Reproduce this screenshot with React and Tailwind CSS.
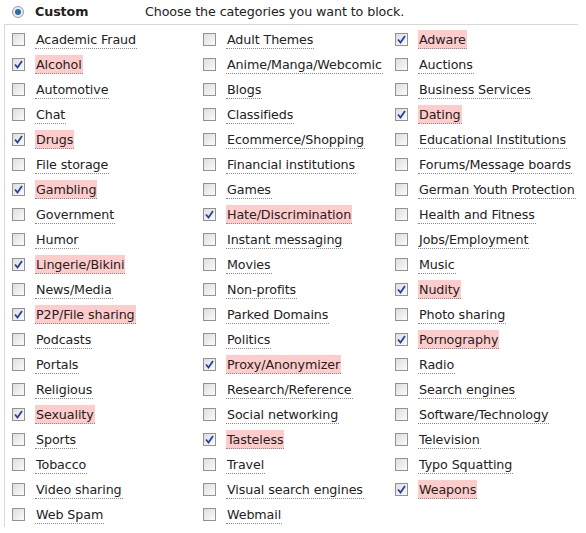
import React from "react";

const rows = [
  ["Academic Fraud", "Adult Themes", "Adware"],
  ["Alcohol", "Anime/Manga/Webcomic", "Auctions"],
  ["Automotive", "Blogs", "Business Services"],
  ["Chat", "Classifieds", "Dating"],
  ["Drugs", "Ecommerce/Shopping", "Educational Institutions"],
  ["File storage", "Financial institutions", "Forums/Message boards"],
  ["Gambling", "Games", "German Youth Protection"],
  ["Government", "Hate/Discrimination", "Health and Fitness"],
  ["Humor", "Instant messaging", "Jobs/Employment"],
  ["Lingerie/Bikini", "Movies", "Music"],
  ["News/Media", "Non-profits", "Nudity"],
  ["P2P/File sharing", "Parked Domains", "Photo sharing"],
  ["Podcasts", "Politics", "Pornography"],
  ["Portals", "Proxy/Anonymizer", "Radio"],
  ["Religious", "Research/Reference", "Search engines"],
  ["Sexuality", "Social networking", "Software/Technology"],
  ["Sports", "Tasteless", "Television"],
  ["Tobacco", "Travel", "Typo Squatting"],
  ["Video sharing", "Visual search engines", "Weapons"],
  ["Web Spam", "Webmail", null],
];

const blocked = [
  "Alcohol",
  "Drugs",
  "Gambling",
  "Lingerie/Bikini",
  "P2P/File sharing",
  "Sexuality",
  "Hate/Discrimination",
  "Proxy/Anonymizer",
  "Tasteless",
  "Adware",
  "Dating",
  "Nudity",
  "Pornography",
  "Weapons",
];

const Checkbox = ({ checked }) => (
  <span className="w-[13px] h-[13px] shrink-0 border border-[#939393] bg-gradient-to-br from-[#dedede] to-[#fbfbfb] flex items-center justify-center">
    {checked && (
      <svg width="9" height="9" viewBox="0 0 9 9">
        <path
          d="M1 4.5 L3.5 7.5 L8 1"
          fill="none"
          stroke="#2a3f9a"
          strokeWidth="1.8"
        />
      </svg>
    )}
  </span>
);

const Item = ({ name }) => {
  if (!name) return <div />;
  const on = blocked.includes(name);
  return (
    <label className="flex items-center h-[25px]">
      <Checkbox checked={on} />
      <span
        className={`ml-[10px] px-[1px] pt-[1px] leading-[17px] border-b border-dotted border-[#8a8a8a] whitespace-nowrap ${
          on ? "bg-[#ffcccc]" : ""
        }`}
      >
        {name}
      </span>
    </label>
  );
};

const App = () => {
  return (
    <div
      className="w-[586px] h-[533px] bg-white text-[12.7px] tracking-[-0.1px] text-[#222] overflow-hidden"
      style={{ fontFamily: "'DejaVu Sans', Verdana, sans-serif" }}
    >
      <div className="flex items-center h-[24px] pl-[12px]">
        <span className="w-[12px] h-[12px] rounded-full border border-[#9a9a9a] bg-[#eee] flex items-center justify-center">
          <span className="w-[6px] h-[6px] rounded-full bg-[#1f6fb8]" />
        </span>
        <span className="ml-[11px] font-bold w-[110px]">Custom</span>
        <span>Choose the categories you want to block.</span>
      </div>
      <div className="ml-[4px] w-[574px] border-t border-l border-[#d8d8d8] pt-[2px] pl-[7px]">
        <div className="grid grid-cols-[191px_192px_1fr]">
          {rows.map((r, i) =>
            r.map((name, j) => <Item key={`${i}-${j}`} name={name} />)
          )}
        </div>
      </div>
    </div>
  );
};

export default App;
